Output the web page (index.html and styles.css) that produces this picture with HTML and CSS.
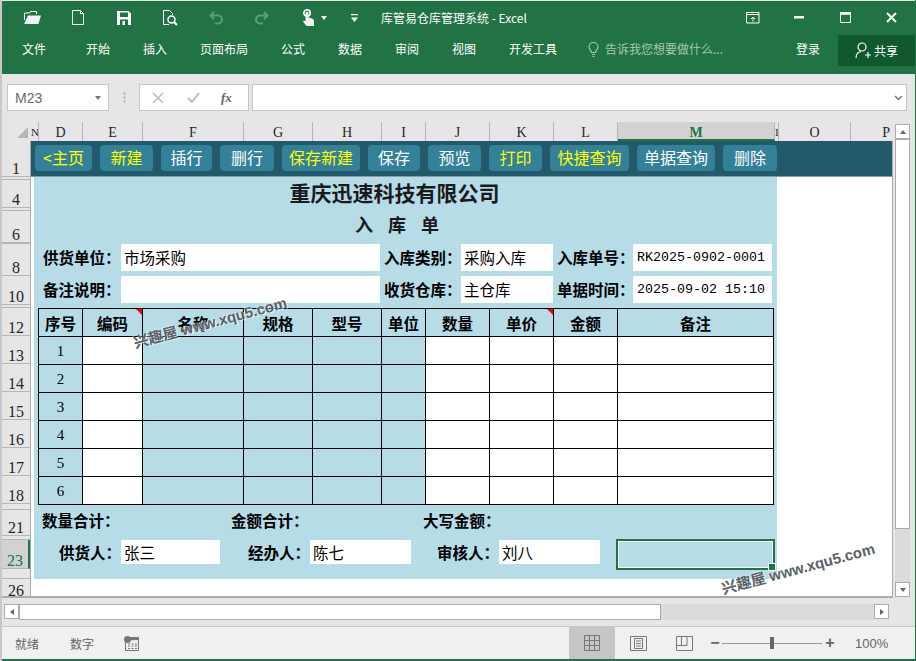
FILE: index.html
```html
<!DOCTYPE html>
<html lang="zh-CN">
<head>
    <meta charset="UTF-8">
    <title>库管易仓库管理系统 - Excel</title>
    <link rel="stylesheet" href="styles.css">
</head>
<body>
<div class="window">
    <div class="title-bar">
        <div class="qat">
            <span class="qat-btn"><svg width="17" height="13" viewBox="0 0 17 13"><path d="M.5 9V2h5l1-1.500h6V3" fill="none" stroke="#fff"/><path d="M4 4.500h13L14.500 13H0z" fill="#f2f2f2"/></svg></span>
            <span class="qat-btn"><svg width="12" height="15" viewBox="0 0 12 15"><path d="M.5.5h8l3 3v11H.5z" fill="none" stroke="#fff"/><path d="M8 1h1v2h2v1H8z" fill="#fff"/></svg></span>
            <span class="qat-btn"><svg width="14" height="14" viewBox="0 0 14 14"><path d="M0 0h11.500L14 2.500V14H0zM3 1.500V6h8V1.500zM3 8.500V14h8V8.500zM5.500 10H8v4H5.500z" fill="#fff" fill-rule="evenodd"/></svg></span>
            <span class="qat-btn"><svg width="15" height="16" viewBox="0 0 15 16"><path d="M.5 15V.5h6l3 3V5M.5 14.500H6" fill="none" stroke="#fff"/><circle cx="8.500" cy="9.500" r="3.500" fill="none" stroke="#fff" stroke-width="1.500"/><path d="M11 12l3 3" stroke="#fff" stroke-width="2"/></svg></span>
            <span class="qat-btn"><svg width="14" height="14" viewBox="0 0 14 14"><path d="M5 1L1.500 4.500 5 8M2 4.500h7a3.800 3.800 0 0 1 0 8H6" fill="none" stroke="#5f9b7c" stroke-width="2"/></svg></span>
            <span class="qat-btn"><svg width="14" height="14" viewBox="0 0 14 14"><path d="M9 1l3.500 3.500L9 8M12 4.500H5a3.800 3.800 0 0 0 0 8h3" fill="none" stroke="#5f9b7c" stroke-width="2"/></svg></span>
            <span class="qat-btn"><svg width="13" height="17" viewBox="0 0 13 17"><circle cx="5" cy="4" r="3.200" fill="none" stroke="#fff" stroke-width="1.600"/><path d="M3.500 4a1.500 1.500 0 0 1 3 0v4.500l3.500 1c1.500.5 2 1.500 2 3V17H4.500L1 12.500l1-1 1.500 1z" fill="#f2f2f2"/></svg><i class="caret-white"></i></span>
            <span class="qat-btn"><svg width="7" height="8" viewBox="0 0 7 8"><path d="M0 0h7v1.200H0zM0 3.500h7L3.500 8z" fill="#fff"/></svg></span>
        </div>
        <span class="doc-title">库管易仓库管理系统 - Excel</span>
        <div class="win-btns">
            <span class="win-btn"><svg width="14" height="12" viewBox="0 0 14 12"><path d="M.5.500h12.500v10.500H.5zM1 2.500h12M7 9.500V5M5 7l2-2 2 2" fill="none" stroke="#fff"/></svg></span>
            <span class="win-btn"><svg width="10" height="3" viewBox="0 0 10 3"><path d="M0 0h10v2.500H0z" fill="#fff"/></svg></span>
            <span class="win-btn"><svg width="11" height="11" viewBox="0 0 11 11"><path d="M.5 2h10v8.500H.5z" fill="none" stroke="#fff"/><path d="M0 0h11v2.500H0z" fill="#fff"/></svg></span>
            <span class="win-btn"><svg width="11" height="11" viewBox="0 0 11 11"><path d="M1 1l9 9M10 1l-9 9" stroke="#fff" stroke-width="2"/></svg></span>
        </div>
    </div>

    <div class="tab-bar">
        <span class="tab tab-file">文件</span>
        <span class="tab">开始</span>
        <span class="tab">插入</span>
        <span class="tab">页面布局</span>
        <span class="tab">公式</span>
        <span class="tab">数据</span>
        <span class="tab">审阅</span>
        <span class="tab">视图</span>
        <span class="tab">开发工具</span>
        <span class="tell-me">
            <svg width="11" height="15" viewBox="0 0 11 15"><path d="M3.500 10.500C3 8 1 7.500 1 5a4.500 4.500 0 0 1 9 0c0 2.500-2 3-2.500 5.500zM4 12.500h3M4.500 14.500h2" fill="none" stroke="#a6c8b5" stroke-width="1.200"/></svg>
            <span>告诉我您想要做什么...</span>
        </span>
        <span class="login">登录</span>
        <span class="share">
            <svg width="17" height="17" viewBox="0 0 17 17"><circle cx="7" cy="5" r="4" fill="none" stroke="#fff" stroke-width="1.200"/><path d="M1 16c0-4 2-6 5-6.500M13 10v6M10 13h6" fill="none" stroke="#fff" stroke-width="1.200"/></svg>
            共享
        </span>
    </div>

    <div class="formula-bar">
        <div class="name-box"><span>M23</span><i class="caret-grey"></i></div>
        <div class="grip"></div>
        <div class="fx-box">
            <svg width="12" height="12" viewBox="0 0 12 12"><path d="M1 1l10 10M11 1L1 11" stroke="#bdbdbd" stroke-width="1.500"/></svg>
            <svg width="13" height="11" viewBox="0 0 13 11"><path d="M1 6l4 4 7-9" fill="none" stroke="#bdbdbd" stroke-width="2"/></svg>
            <span class="fx">fx</span>
        </div>
        <div class="formula-input">
            <svg width="9" height="6" viewBox="0 0 9 6"><path d="M1 1l3.500 3.500L8 1" fill="none" stroke="#777" stroke-width="1.500"/></svg>
        </div>
    </div>

    <div class="main">
        <div class="grid-area">
            <div class="col-heads">
                <div class="corner"><i></i></div>
                <div class="col-head col-cut">N</div>
                <div class="col-head">D</div>
                <div class="col-head">E</div>
                <div class="col-head">F</div>
                <div class="col-head">G</div>
                <div class="col-head">H</div>
                <div class="col-head">I</div>
                <div class="col-head">J</div>
                <div class="col-head">K</div>
                <div class="col-head">L</div>
                <div class="col-head col-active">M</div>
                <div class="col-head col-cut">I</div>
                <div class="col-head">O</div>
                <div class="col-head col-last">P</div>
            </div>
            <div class="grid-body">
                <div class="row-heads">
                    <div class="row-head row-36">1</div>
                    <div class="row-head row-3"></div>
                    <div class="row-head row-28">4</div>
                    <div class="row-head row-3"></div>
                    <div class="row-head row-32">6</div>
                    <div class="row-head row-1"></div>
                    <div class="row-head row-32">8</div>
                    <div class="row-head row-29">10</div>
                    <div class="row-head row-3"></div>
                    <div class="row-head row-28">12</div>
                    <div class="row-head row-28">13</div>
                    <div class="row-head row-28">14</div>
                    <div class="row-head row-28">15</div>
                    <div class="row-head row-28">16</div>
                    <div class="row-head row-28">17</div>
                    <div class="row-head row-28">18</div>
                    <div class="row-head row-6"></div>
                    <div class="row-head row-26">21</div>
                    <div class="row-head row-4"></div>
                    <div class="row-head row-29 row-active">23</div>
                    <div class="row-head row-10"></div>
                    <div class="row-head row-19">26</div>
                </div>
                <div class="sheet">
                    <div class="toolbar">
                        <button class="tool-btn btn-home">&lt;主页</button>
                        <button class="tool-btn btn-new">新建</button>
                        <button class="tool-btn btn-ins">插行</button>
                        <button class="tool-btn btn-del">删行</button>
                        <button class="tool-btn btn-savenew">保存新建</button>
                        <button class="tool-btn btn-save">保存</button>
                        <button class="tool-btn btn-view">预览</button>
                        <button class="tool-btn btn-print">打印</button>
                        <button class="tool-btn btn-quick">快捷查询</button>
                        <button class="tool-btn btn-query">单据查询</button>
                        <button class="tool-btn btn-remove">删除</button>
                    </div>
                    <div class="form">
                        <h1 class="company">重庆迅速科技有限公司</h1>
                        <h2 class="doc-name">入 库 单</h2>

                        <div class="fields">
                            <label class="lbl">供货单位：</label><div class="val">市场采购</div>
                            <label class="lbl lbl-mid">入库类别：</label><div class="val">采购入库</div>
                            <label class="lbl lbl-mid">入库单号：</label><div class="val val-mono">RK2025-0902-0001</div>
                            <label class="lbl">备注说明：</label><div class="val"></div>
                            <label class="lbl lbl-mid">收货仓库：</label><div class="val">主仓库</div>
                            <label class="lbl lbl-mid">单据时间：</label><div class="val val-mono">2025-09-02 15:10</div>
                        </div>

                        <table class="items">
                            <colgroup>
                                <col class="c-44"><col class="c-60"><col class="c-101"><col class="c-69"><col class="c-69">
                                <col class="c-44"><col class="c-64"><col class="c-64"><col class="c-64"><col class="c-156">
                            </colgroup>
                            <thead>
                                <tr>
                                    <th>序号</th><th class="has-note">编码</th><th>名称</th><th>规格</th><th>型号</th>
                                    <th>单位</th><th>数量</th><th class="has-note">单价</th><th>金额</th><th>备注</th>
                                </tr>
                            </thead>
                            <tbody>
                                <tr><td class="num">1</td><td class="w"></td><td></td><td></td><td></td><td></td><td class="w"></td><td class="w"></td><td class="w"></td><td class="w"></td></tr>
                                <tr><td class="num">2</td><td class="w"></td><td></td><td></td><td></td><td></td><td class="w"></td><td class="w"></td><td class="w"></td><td class="w"></td></tr>
                                <tr><td class="num">3</td><td class="w"></td><td></td><td></td><td></td><td></td><td class="w"></td><td class="w"></td><td class="w"></td><td class="w"></td></tr>
                                <tr><td class="num">4</td><td class="w"></td><td></td><td></td><td></td><td></td><td class="w"></td><td class="w"></td><td class="w"></td><td class="w"></td></tr>
                                <tr><td class="num">5</td><td class="w"></td><td></td><td></td><td></td><td></td><td class="w"></td><td class="w"></td><td class="w"></td><td class="w"></td></tr>
                                <tr><td class="num">6</td><td class="w"></td><td></td><td></td><td></td><td></td><td class="w"></td><td class="w"></td><td class="w"></td><td class="w"></td></tr>
                            </tbody>
                        </table>

                        <div class="totals">
                            <span class="total-a">数量合计：</span>
                            <span class="total-b">金额合计：</span>
                            <span>大写金额：</span>
                        </div>

                        <div class="signs">
                            <label class="lbl">供货人：</label><div class="val">张三</div>
                            <label class="lbl">经办人：</label><div class="val">陈七</div>
                            <label class="lbl">审核人：</label><div class="val">刘八</div>
                            <div class="active-cell"><i></i></div>
                        </div>
                    </div>
                </div>
            </div>
        </div>
        <div class="vscroll">
            <span class="sb-btn"><i class="arrow-up"></i></span>
            <span class="sb-thumb-v"></span>
            <span class="sb-track"></span>
            <span class="sb-btn"><i class="arrow-down"></i></span>
        </div>
    </div>

    <div class="hbar">
        <span class="sb-btn"><i class="arrow-left"></i></span>
        <span class="sb-thumb-h"></span>
        <span class="sb-track"></span>
        <span class="sb-btn"><i class="arrow-right"></i></span>
    </div>

    <div class="status-bar">
        <span class="st-text st-ready">就绪</span>
        <span class="st-text st-num">数字</span>
        <svg class="st-macro" width="15" height="15" viewBox="0 0 15 15"><path d="M6 1h9v3.500H6z" fill="#777"/><path d="M1.500 5v9.500h13V4" fill="#f0f0f0" stroke="#777"/><circle cx="3.500" cy="3.500" r="3.500" fill="#777"/><path d="M4 8h2M7.500 8h2M11 8h2M4 10h2M7.500 10h2M11 10h2M4 12.500h2M7.500 12.500h2M11 12.500h2" stroke="#777"/></svg>
        <div class="st-right">
            <span class="view-btn view-active"><svg width="16" height="16" viewBox="0 0 16 16"><path d="M.5.500h15v15H.5zM5.500.5v15M10.500.5v15M.5 5.500h15M.5 10.500h15" fill="none" stroke="#777"/></svg></span>
            <span class="view-btn"><svg width="17" height="15" viewBox="0 0 17 15"><path d="M.5.500h16v14H.5zM4.500 2.500h8v10h-8zM6 5h5M6 7.500h5M6 10h5" fill="none" stroke="#777"/></svg></span>
            <span class="view-btn"><svg width="17" height="15" viewBox="0 0 17 15"><path d="M.5.500h16v14H.5zM.5 9.500h10.500V.5M5.500.5v9" fill="none" stroke="#777"/></svg></span>
            <span class="zoom-sign zoom-minus">−</span>
            <span class="zoom-slider"><i></i></span>
            <span class="zoom-sign zoom-plus">+</span>
            <span class="zoom-val">100%</span>
        </div>
    </div>

    <div class="watermark wm-a">兴趣屋 www.xqu5.com</div>
    <div class="watermark wm-b">兴趣屋 www.xqu5.com</div>
</div>
</body>
</html>
```

FILE: styles.css
```css
* {
    box-sizing: border-box;
}

html, body {
    margin: 0;
    padding: 0;
}

body {
    font-family: "Noto Sans CJK SC", "Liberation Sans", sans-serif;
    background-color: #c8c8c8;
}

.window {
    position: relative;
    width: 914px;
    height: 661px;
    margin-left: 2px;
    padding-top: 1px;
    background-color: #e6e6e6;
    border-right: 1px solid #217346;
    display: flex;
    flex-direction: column;
    overflow: hidden;
}

/* title bar */
.title-bar {
    height: 33px;
    flex: none;
    display: flex;
    align-items: center;
    background-color: #217346;
    color: #fff;
    padding-left: 7px;
}

.qat {
    display: flex;
}

.qat-btn {
    width: 46px;
    height: 33px;
    display: flex;
    align-items: center;
    justify-content: center;
    gap: 6px;
}

.caret-white {
    width: 0;
    height: 0;
    border: 3px solid transparent;
    border-top: 4px solid #fff;
    border-bottom: 0;
    margin-right: -12px;
}

.doc-title {
    margin-left: 4px;
    font-size: 12px;
}

.win-btns {
    margin-left: auto;
    margin-right: 1px;
    display: flex;
}

.win-btn {
    width: 46px;
    height: 33px;
    display: flex;
    align-items: center;
    justify-content: center;
}

/* ribbon tabs */
.tab-bar {
    height: 40px;
    flex: none;
    display: flex;
    align-items: flex-start;
    background-color: #217346;
    color: #fff;
    font-size: 12px;
    padding-left: 20px;
    line-height: 30px;
}

.tab {
    margin-right: 33px;
}

.tab-file {
    margin-right: 40px;
}

.tell-me {
    display: flex;
    align-items: center;
    gap: 6px;
    height: 30px;
    margin-left: -2px;
    color: #a6c8b5;
    white-space: nowrap;
}

.login {
    margin-left: 73px;
}

.share {
    margin-left: 18px;
    margin-top: 1px;
    width: 77px;
    height: 31px;
    background-color: #10592f;
    display: flex;
    align-items: center;
    justify-content: center;
    gap: 2px;
}

/* formula bar */
.formula-bar {
    height: 48px;
    flex: none;
    display: flex;
    align-items: flex-start;
    padding-top: 10px;
    padding-left: 5px;
}

.name-box {
    width: 102px;
    height: 27px;
    background-color: #fff;
    border: 1px solid #c6c6c6;
    display: flex;
    align-items: center;
    justify-content: space-between;
    padding: 0 7px 0 7px;
    font-family: "Liberation Sans", sans-serif;
    font-size: 14px;
    color: #6b6b6b;
}

.caret-grey {
    width: 0;
    height: 0;
    border: 3.500px solid transparent;
    border-top: 4px solid #777;
    border-bottom: 0;
}

.grip {
    width: 30px;
    height: 11px;
    margin-top: 8px;
    background-image: radial-gradient(circle, #aaa 1px, transparent 1.200px);
    background-size: 3px 4px;
    background-repeat: repeat-y;
    background-position: center;
}

.fx-box {
    width: 110px;
    height: 27px;
    background-color: #fff;
    border: 1px solid #c6c6c6;
    display: flex;
    align-items: center;
    padding-left: 12px;
    gap: 23px;
}

.fx {
    font-family: "Liberation Serif", serif;
    font-style: italic;
    font-weight: bold;
    font-size: 13px;
    color: #666;
    margin-left: -2px;
}

.formula-input {
    width: 655px;
    height: 27px;
    margin-left: 3px;
    background-color: #fff;
    border: 1px solid #c6c6c6;
    display: flex;
    align-items: center;
    justify-content: flex-end;
    padding-right: 3px;
}

/* grid */
.main {
    height: 476px;
    flex: none;
    display: flex;
}

.grid-area {
    width: 891px;
    display: flex;
    flex-direction: column;
}

.col-heads {
    height: 19px;
    flex: none;
    display: grid;
    grid-template-columns: 29px 8px 44px 60px 101px 69px 69px 44px 64px 64px 64px 157px 4px 72px 41px;
}

.corner {
    position: relative;
}

.corner i {
    position: absolute;
    right: 3px;
    bottom: 3px;
    width: 0;
    height: 0;
    border-left: 11px solid transparent;
    border-bottom: 11px solid #b5b5b5;
}

.col-head {
    border-right: 1px solid #b5b5b5;
    font-family: "Liberation Serif", serif;
    font-size: 14px;
    line-height: 21px;
    text-align: center;
    color: #262626;
    overflow: hidden;
}

.col-cut {
    font-size: 11px;
}

.col-last {
    border-right: 0;
    text-align: right;
    padding-right: 2px;
}

.col-active {
    background-color: #d2d2d2;
    color: #217346;
    font-weight: bold;
    border-bottom: 2px solid #217346;
}

.grid-body {
    flex: 1;
    display: flex;
    border-right: 1px solid #ababab;
    border-bottom: 2px solid #ababab;
    height: 457px;
}

.row-heads {
    width: 28px;
    flex: none;
}

.row-head {
    border-bottom: 1px solid #b5b5b5;
    font-family: "Liberation Serif", serif;
    font-size: 16px;
    line-height: 14px;
    color: #262626;
    display: flex;
    align-items: flex-end;
    justify-content: center;
    overflow: hidden;
}

.row-1 { height: 1px; }
.row-3 { height: 3px; }
.row-4 { height: 4px; }
.row-6 { height: 6px; }
.row-10 { height: 10px; }
.row-19 { height: 19px; border-bottom: 0; }
.row-26 { height: 26px; }
.row-28 { height: 28px; }
.row-29 { height: 29px; }
.row-32 { height: 32px; }
.row-36 { height: 36px; }

.row-active {
    background-color: #d2d2d2;
    color: #217346;
    border-right: 2px solid #217346;
}

.sheet {
    flex: 1;
    background-color: #fff;
    border-left: 1px solid #ababab;
    margin-left: 0;
}

/* the buttons sit on the dark band */
.toolbar {
    height: 36px;
    display: flex;
    gap: 8px;
    padding: 4px 0 0 4px;
    background-color: #225a6c;
    border-bottom: 1px solid #8a9ba1;
}

.tool-btn {
    height: 26px;
    border: 0;
    border-radius: 4px;
    background-color: #338199;
    color: #fff;
    font-family: inherit;
    font-size: 16px;
    line-height: 24px;
    padding: 0 0 2px 0;
}

.btn-home { width: 57px; color: #ffff00; }
.btn-new { width: 53px; color: #ffff00; }
.btn-ins { width: 51px; }
.btn-del { width: 54px; }
.btn-savenew { width: 78px; color: #ffff00; }
.btn-save { width: 52px; }
.btn-view { width: 53px; }
.btn-print { width: 53px; color: #ffff00; }
.btn-quick { width: 79px; color: #ffff00; }
.btn-query { width: 78px; }
.btn-remove { width: 54px; }

.form {
    width: 743px;
    height: 402px;
    margin-left: 3px;
    background-color: #b6dce8;
    color: #000;
}

.company {
    margin: 0;
    height: 34px;
    font-size: 21px;
    line-height: 30px;
    text-align: center;
    padding-right: 22px;
    font-weight: bold;
    color: #1a1a1a;
}

.doc-name {
    margin: 0;
    height: 33px;
    font-size: 18px;
    line-height: 27px;
    text-align: center;
    word-spacing: 11px;
    padding-right: 17px;
    font-weight: bold;
    color: #1a1a1a;
}

.fields {
    display: grid;
    grid-template-columns: 78px 259px 81px 92px 80px 139px;
    grid-auto-rows: 27px;
    row-gap: 5px;
    padding-left: 9px;
}

.lbl {
    font-size: 15.500px;
    font-weight: bold;
    line-height: 27px;
    white-space: nowrap;
}

.lbl-mid {
    padding-left: 4px;
    margin-right: -4px;
}

.val {
    background-color: #fff;
    font-size: 15.500px;
    line-height: 27px;
    padding-left: 3px;
}

.val-mono {
    font-family: "Liberation Mono", monospace;
    font-size: 13.330px;
    padding-left: 4px;
}

.items {
    margin: 5px 0 0 4px;
    width: 735px;
    border-collapse: collapse;
    table-layout: fixed;
}

.c-44 { width: 44px; }
.c-60 { width: 60px; }
.c-64 { width: 64px; }
.c-69 { width: 69px; }
.c-101 { width: 101px; }
.c-156 { width: 156px; }

.items th,
.items td {
    border: 1px solid #000;
    height: 28px;
    padding: 0;
    text-align: center;
}

.items th {
    font-size: 15.500px;
    font-weight: bold;
    position: relative;
}

.has-note::after {
    content: "";
    position: absolute;
    top: 0;
    right: 0;
    width: 0;
    height: 0;
    border-top: 6px solid #ff0000;
    border-left: 6px solid transparent;
}

.items .w {
    background-color: #fff;
}

.items .num {
    font-family: "Liberation Serif", serif;
    font-size: 15px;
    padding-top: 2px;
}

.totals {
    display: flex;
    height: 34px;
    padding: 3px 0 0 8px;
    font-size: 15.500px;
    font-weight: bold;
    line-height: 24px;
}

.total-a {
    width: 189px;
}

.total-b {
    width: 192px;
}

.signs {
    display: grid;
    grid-template-columns: 78px 99px 90px 101px 88px 101px 159px;
    grid-template-rows: 24px;
    padding-left: 9px;
    margin-top: 1px;
}

.signs .lbl {
    text-align: right;
    line-height: 24px;
}

.signs .val {
    line-height: 24px;
}

.active-cell {
    width: 159px;
    height: 31px;
    margin: -1px 0 0 16px;
    border: 2px solid #217346;
    position: relative;
}

.active-cell i {
    position: absolute;
    inset: 0;
    border: 1px solid #fff;
}

.active-cell::after {
    content: "";
    position: absolute;
    right: -3px;
    bottom: -3px;
    width: 6px;
    height: 6px;
    background-color: #217346;
    border: 1px solid #fff;
}

/* scrollbars */
.vscroll {
    width: 15px;
    margin-left: 2px;
    padding-top: 2px;
    height: 475px;
    display: flex;
    flex-direction: column;
}

.sb-btn {
    flex: none;
    width: 15px;
    height: 15px;
    background-color: #fff;
    border: 1px solid #ababab;
    display: flex;
    align-items: center;
    justify-content: center;
}

.sb-thumb-v {
    height: 390px;
    flex: none;
    background-color: #fff;
    border: 1px solid #ababab;
}

.sb-track {
    flex: 1;
    background-color: #dbdbdb;
}

.arrow-up,
.arrow-down,
.arrow-left,
.arrow-right {
    width: 0;
    height: 0;
    border: 3.500px solid transparent;
}

.arrow-up { border-bottom: 4px solid #666; border-top: 0; }
.arrow-down { border-top: 4px solid #666; border-bottom: 0; }
.arrow-left { border-right: 4px solid #666; border-left: 0; }
.arrow-right { border-left: 4px solid #666; border-right: 0; }

.hbar {
    height: 28px;
    flex: none;
    display: flex;
    padding: 6px 0 6px 2px;
    width: 887px;
}

.sb-thumb-h {
    width: 642px;
    flex: none;
    background-color: #fff;
    border: 1px solid #ababab;
}

/* status bar */
.status-bar {
    height: 35px;
    flex: none;
    display: flex;
    align-items: center;
    background-color: #f0f0f0;
    border-top: 1px solid #c6c6c6;
    border-bottom: 2px solid #217346;
    font-size: 12px;
    color: #666;
}

.st-ready {
    margin-left: 13px;
}

.st-num {
    margin-left: 31px;
}

.st-macro {
    margin-left: 30px;
}

.st-right {
    margin-left: auto;
    height: 100%;
    display: flex;
    align-items: center;
}

.view-btn {
    width: 46px;
    height: 100%;
    display: flex;
    align-items: center;
    justify-content: center;
}

.view-active {
    background-color: #c6c6c6;
}

.zoom-sign {
    width: 14px;
    font-family: "Liberation Sans", sans-serif;
    font-size: 16px;
    font-weight: bold;
    text-align: center;
}

.zoom-minus,
.zoom-plus {
    margin-left: 1px;
}

.zoom-slider {
    position: relative;
    width: 100px;
    height: 1px;
    background-color: #999;
}

.zoom-slider i {
    position: absolute;
    left: 48px;
    top: -6px;
    width: 4px;
    height: 12px;
    background-color: #666;
}

.zoom-val {
    width: 60px;
    margin-left: 18px;
    font-family: "Liberation Sans", sans-serif;
    font-size: 13px;
}

/* watermark lies over the sheet */
.watermark {
    position: absolute;
    font-family: "Liberation Sans", "Noto Sans CJK SC", sans-serif;
    font-size: 15px;
    font-weight: bold;
    color: #596268;
    text-shadow: 1px 1px 0 rgba(255, 255, 255, 0.7), -1px -1px 0 rgba(255, 255, 255, 0.4);
    white-space: nowrap;
    transform: rotate(-15deg);
}

.wm-a {
    left: 129px;
    top: 311px;
}

.wm-b {
    left: 717px;
    top: 557px;
}
```
